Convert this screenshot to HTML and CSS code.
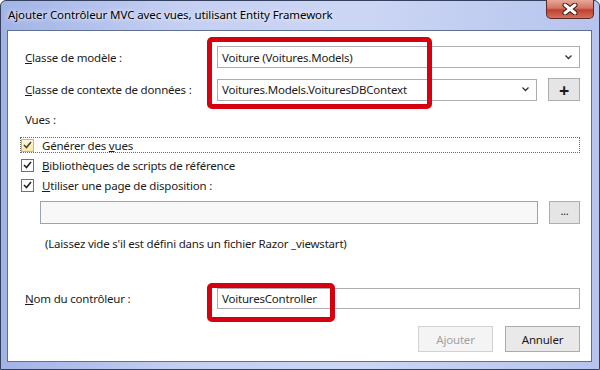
FILE: index.html
```html
<!DOCTYPE html>
<html lang="fr">
  <head>
    <meta charset="UTF-8" />
    <title>Ajouter Contrôleur MVC</title>
    <link rel="stylesheet" href="styles.css">
  </head>
  <body>
    <div class="window">
      <div class="titlebar">
        <span class="title">Ajouter Contrôleur MVC avec vues, utilisant Entity Framework</span>
        <div class="close">
          <svg width="16" height="12" viewBox="0 0 16 12">
            <path d="M3 2 L13 10 M13 2 L3 10" stroke="#3a1410" stroke-width="5" stroke-linecap="round" />
            <path d="M3 2 L13 10 M13 2 L3 10" stroke="#fff" stroke-width="3" stroke-linecap="round" />
          </svg>
        </div>
      </div>

      <div class="client">
        <div class="form-row">
          <label class="label"><u>C</u>lasse de modèle :</label>
          <div class="combo">
            <span>Voiture (Voitures.Models)</span>
            <svg class="arrow" width="7" height="5" viewBox="0 0 7 5"><path d="M0.5 0.5 L3.5 3.5 L6.5 0.5" stroke="#333" stroke-width="1.3" fill="none" /></svg>
          </div>
        </div>

        <div class="form-row row-context">
          <label class="label"><u>C</u>lasse de contexte de données :</label>
          <div class="combo">
            <span>Voitures.Models.VoituresDBContext</span>
            <svg class="arrow" width="7" height="5" viewBox="0 0 7 5"><path d="M0.5 0.5 L3.5 3.5 L6.5 0.5" stroke="#333" stroke-width="1.3" fill="none" /></svg>
          </div>
          <div class="btn-square plus">+</div>
        </div>

        <div class="section-label">Vues :</div>

        <div class="checks">
          <div class="check-row focus">
            <span class="box hover"><svg width="9" height="8" viewBox="0 0 9 8"><path d="M1 4 L3.5 6.5 L8 1" stroke="#444" stroke-width="1.6" fill="none" /></svg></span>
            <span>Générer des <u>v</u>ues</span>
          </div>
          <div class="check-row">
            <span class="box"><svg width="9" height="8" viewBox="0 0 9 8"><path d="M1 4 L3.5 6.5 L8 1" stroke="#222" stroke-width="1.6" fill="none" /></svg></span>
            <span><u>B</u>ibliothèques de scripts de référence</span>
          </div>
          <div class="check-row">
            <span class="box"><svg width="9" height="8" viewBox="0 0 9 8"><path d="M1 4 L3.5 6.5 L8 1" stroke="#222" stroke-width="1.6" fill="none" /></svg></span>
            <span><u>U</u>tiliser une page de disposition :</span>
          </div>
        </div>

        <div class="layout-row">
          <div class="textbox disabled"></div>
          <div class="btn-square browse">...</div>
        </div>

        <div class="hint">(Laissez vide s'il est défini dans un fichier Razor _viewstart)</div>

        <div class="form-row row-controller">
          <label class="label"><u>N</u>om du contrôleur :</label>
          <div class="textbox">VoituresController</div>
        </div>

        <div class="actions">
          <div class="btn disabled-btn">Ajouter</div>
          <div class="btn">Annuler</div>
        </div>
      </div>

      <div class="highlight hl-context"></div>
      <div class="highlight hl-controller"></div>
    </div>
  </body>
</html>
```

FILE: styles.css
```css
body {
  margin: 0;
  font-family: "Noto Sans", sans-serif;
  font-size: 11.5px;
  letter-spacing: -0.2px;
  color: #1b1b1b;
  background: #fff;
}

.window {
  position: relative;
  width: 600px;
  height: 370px;
  box-sizing: border-box;
  border: 1px solid #33415f;
  border-radius: 6px 6px 0 0;
  background: linear-gradient(to right, #a2b3e6, #c4cff2 30%, #ccd6f4 60%, #b6c4ee);
  display: flex;
  flex-direction: column;
}

.titlebar {
  height: 29px;
  display: flex;
  align-items: flex-start;
}

.title {
  padding: 6px 0 0 7px;
  line-height: 16px;
  letter-spacing: -0.1px;
  color: #000;
  text-shadow: 0 0 6px #eef2ff, 0 0 3px #eef2ff;
}

.close {
  margin-left: auto;
  margin-right: 5px;
  margin-top: -1px;
  width: 48px;
  height: 19px;
  box-sizing: border-box;
  border: 1px solid #5b2a24;
  border-top: none;
  border-radius: 0 0 5px 5px;
  background: linear-gradient(#e8a898, #d27563 45%, #c0402e 55%, #d2705c);
  display: flex;
  align-items: center;
  justify-content: center;
}

.client {
  flex: 1;
  margin: 0 7px 7px 6px;
  background: #fff;
  border: 1px solid #5f6f90;
  padding: 15px 11px 0 17px;
}

.form-row {
  display: flex;
  align-items: center;
}

.label {
  width: 192px;
  flex-shrink: 0;
}

.combo {
  flex: 1;
  height: 22px;
  box-sizing: border-box;
  border: 1px solid #abadb3;
  padding: 0 7px 0 4px;
  display: flex;
  align-items: center;
  justify-content: space-between;
}

.row-context {
  margin-top: 10px;
}

.btn-square {
  height: 23px;
  box-sizing: border-box;
  border: 1px solid #adadad;
  background: #e5e5e5;
  display: flex;
  align-items: center;
  justify-content: center;
}

.plus {
  width: 32px;
  margin-left: 11px;
  font-size: 18px;
  font-weight: bold;
  line-height: 1;
}

.section-label {
  margin-top: 11px;
  line-height: 16px;
}

.checks {
  margin: 9px 0 0 -5px;
}

.check-row {
  height: 14px;
  border: 1px dotted transparent;
  margin-bottom: 4px;
  display: flex;
  align-items: center;
  gap: 8px;
}

.check-row.focus {
  border-color: #6a6a6a;
}

.box {
  width: 13px;
  height: 13px;
  box-sizing: border-box;
  border: 1px solid #707070;
  background: #fff;
  display: flex;
  align-items: center;
  justify-content: center;
}

.box.hover {
  border-color: #e0b155;
  background: linear-gradient(#fff8d8, #fbe8a4);
}

.layout-row {
  display: flex;
  margin: 8px 0 0 15px;
}

.textbox {
  flex: 1;
  height: 21px;
  box-sizing: border-box;
  border: 1px solid #abadb3;
  padding: 0 4px;
  display: flex;
  align-items: center;
}

.textbox.disabled {
  height: 23px;
  background: #f8f8f8;
  border-color: #9aa3b3;
}

.browse {
  width: 31px;
  margin-left: 11px;
  font-size: 11px;
  padding-bottom: 4px;
}

.hint {
  margin: 12px 0 0 20px;
  line-height: 16px;
}

.row-controller {
  margin-top: 36px;
}

.actions {
  display: flex;
  justify-content: flex-end;
  gap: 12px;
  margin-top: 17px;
}

.btn {
  width: 75px;
  height: 26px;
  box-sizing: border-box;
  border: 1px solid #acacac;
  background: #e9e9e9;
  display: flex;
  align-items: center;
  justify-content: center;
}

.btn.disabled-btn {
  background: #f4f4f4;
  border-color: #d0d3d6;
  color: #a2a2a2;
}

.highlight {
  position: absolute;
  box-sizing: border-box;
  border: 5px solid #d7000f;
  border-radius: 5px;
}

.hl-context {
  left: 206px;
  top: 36px;
  width: 225px;
  height: 72px;
}

.hl-controller {
  left: 206px;
  top: 282px;
  width: 128px;
  height: 39px;
}
```
